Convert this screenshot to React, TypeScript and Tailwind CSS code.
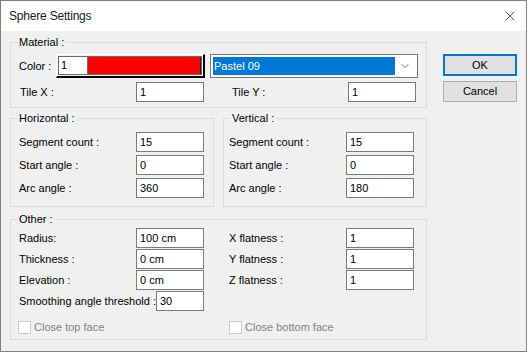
import { ChevronDown, X } from 'lucide-react';

const font = { fontFamily: '"Liberation Sans", Arial, sans-serif' };

const Field = ({ value, width = 'w-[68px]' }: { value: string; width?: string }) => (
  <div className={`${width} h-[20px] bg-white border border-[#7a7a7a] pl-[3px] flex items-center text-[11px] text-black`}>
    {value}
  </div>
);

const Row = ({ label, value }: { label: string; value: string }) => (
  <div className="flex items-center h-[20px]">
    <span className="w-[117px] text-[11px]">{label}</span>
    <Field value={value} />
  </div>
);

const Group = ({
  title,
  className,
  children
}: {
  title: string;
  className: string;
  children: React.ReactNode;
}) => (
  <fieldset className={`border border-[#dcdcdc] ${className}`}>
    <legend className="ml-[6px] px-[2px] text-[11px] leading-[14px] text-black">{title}</legend>
    {children}
  </fieldset>
);

const Check = ({ label }: { label: string }) => (
  <div className="flex items-center gap-[3px] h-[14px]">
    <div className="w-[13px] h-[13px] bg-white border border-[#cccccc]" />
    <span className="text-[11px] text-[#838383]">{label}</span>
  </div>
);

const App = () => {
  return (
    <div
      className="w-[527px] h-[352px] border border-[#808080] bg-[#f0f0f0] flex flex-col text-black"
      style={font}
    >
      {/* title bar */}
      <div className="h-[30px] bg-white flex items-center justify-between pl-[8px] pr-[8px] shrink-0">
        <span className="text-[12px] text-[#1a1a1a] tracking-[-0.2px]">Sphere Settings</span>
        <X className="w-[16px] h-[16px] text-black" strokeWidth={1} />
      </div>

      <div className="flex">
        <div className="pl-[9px] w-[426px] flex flex-col">
          {/* Material */}
          <Group title="Material :" className="mt-[4px] h-[73px]">
            <div className="pl-[8px] pt-[5px] flex flex-col">
              <div className="flex items-center h-[24px]">
                <span className="w-[37px] text-[11px]">Color :</span>
                <div className="w-[149px] h-[24px] border-t border-l border-white border-r-2 border-b-2 border-r-black border-b-black flex p-[1px]">
                  <div className="flex flex-1 border border-[#6a6a6a]">
                    <div className="w-[29px] bg-white flex items-center pl-[2px] text-[11px] border-r border-[#6a6a6a]">1</div>
                    <div className="flex-1 bg-[#ff0000] border-r border-[#222]" />
                  </div>
                </div>
                <div className="ml-[5px] w-[208px] h-[24px] bg-white border border-[#7a7a7a] flex items-center p-[2px]">
                  <div className="flex-1 h-full bg-[#0078d7] text-white text-[11px] flex items-center pl-[1px]">
                    Pastel 09
                  </div>
                  <div className="w-[20px] flex justify-center">
                    <ChevronDown className="w-[12px] h-[12px] text-[#505050]" strokeWidth={1.5} />
                  </div>
                </div>
              </div>
              <div className="flex items-center h-[20px] mt-[4px]">
                <span className="w-[117px] pl-[1px] text-[11px]">Tile X :</span>
                <Field value="1" />
                <span className="w-[144px] pl-[28px] text-[11px]">Tile Y :</span>
                <Field value="1" />
              </div>
            </div>
          </Group>

          {/* Horizontal / Vertical */}
          <div className="flex gap-[9px] mt-[3px]">
            <Group title="Horizontal :" className="w-[204px] h-[96px]">
              <div className="pl-[8px] pt-[7px] flex flex-col gap-[3px]">
                <Row label="Segment count :" value="15" />
                <Row label="Start angle :" value="0" />
                <Row label="Arc angle :" value="360" />
              </div>
            </Group>
            <Group title="Vertical :" className="w-[204px] h-[96px]">
              <div className="pl-[5px] pt-[7px] flex flex-col gap-[3px]">
                <Row label="Segment count :" value="15" />
                <Row label="Start angle :" value="0" />
                <Row label="Arc angle :" value="180" />
              </div>
            </Group>
          </div>

          {/* Other */}
          <Group title="Other :" className="mt-[5px] h-[128px]">
            <div className="pl-[8px] pt-[2px]">
              <div className="grid grid-cols-[210px_1fr]">
                <div className="flex flex-col gap-[1px]">
                  <Row label="Radius:" value="100 cm" />
                  <Row label="Thickness  :" value="0 cm" />
                  <Row label="Elevation :" value="0 cm" />
                  <div className="flex items-center h-[20px]">
                    <span className="w-[137px] text-[11px]">Smoothing angle threshold :</span>
                    <Field value="30" width="w-[48px]" />
                  </div>
                </div>
                <div className="flex flex-col gap-[1px]">
                  <Row label="X flatness :" value="1" />
                  <Row label="Y flatness :" value="1" />
                  <Row label="Z flatness :" value="1" />
                </div>
              </div>
              <div className="grid grid-cols-[210px_1fr] mt-[9px] -ml-[1px]">
                <Check label="Close top face" />
                <div className="pl-[1px]">
                  <Check label="Close bottom face" />
                </div>
              </div>
            </div>
          </Group>
        </div>

        {/* buttons */}
        <div className="ml-[16px] mt-[23px] flex flex-col gap-[5px]">
          <button className="w-[74px] h-[22px] bg-[#e1e1e1] border-2 border-[#0078d7] text-[11px]">OK</button>
          <button className="w-[74px] h-[21px] bg-[#e1e1e1] border border-[#adadad] text-[11px]">Cancel</button>
        </div>
      </div>
    </div>
  );
};

export default App;
